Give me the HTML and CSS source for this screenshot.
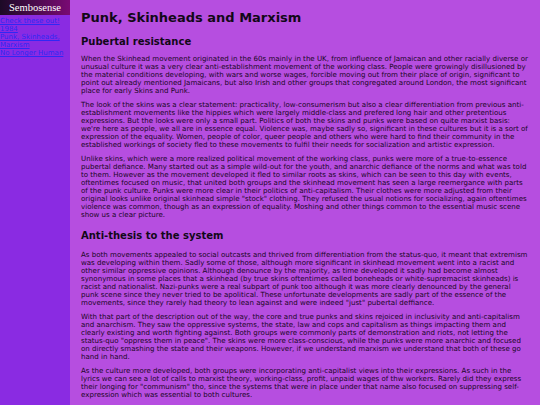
FILE: index.html
```html
<!DOCTYPE html>
<html>
<head>
<meta charset="utf-8">
<link rel="stylesheet" href="styles.css">
</head>
<body>
<div class="page">
  <aside class="sidebar">
    <div class="brand">Sembosense</div>
    <nav class="links">
      <a href="#">Check these out!</a>
      <a href="#">1984</a>
      <a href="#">Punk, Skinheads, Marxism</a>
      <a href="#">No Longer Human</a>
    </nav>
  </aside>
  <main class="content">
    <h1 class="title">Punk, Skinheads and Marxism</h1>
    <h2 class="section">Pubertal resistance</h2>
    <p>When the Skinhead movement originated in the 60s mainly in the UK, from influence of Jamaican and other racially diverse or unusual culture it was a very clear anti-establishment movement of the working class. People were growingly disillusioned by the material conditions developing, with wars and worse wages, forcible moving out from their place of origin, significant to point out already mentioned Jamaicans, but also Irish and other groups that congregated around London, the most significant place for early Skins and Punk.</p>
    <p>The look of the skins was a clear statement: practicality, low-consumerism but also a clear differentiation from previous anti-establishment movements like the hippies which were largely middle-class and prefered long hair and other pretentious expressions. But the looks were only a small part. Politics of both the skins and punks were based on quite marxist basis: we're here as people, we all are in essence equal. Violence was, maybe sadly so, significant in these cultures but it is a sort of expression of the equality. Women, people of color, queer people and others who were hard to find their community in the established workings of society fled to these movements to fulfil their needs for socialization and artistic expression.</p>
    <p>Unlike skins, which were a more realized political movement of the working class, punks were more of a true-to-essence pubertal defiance. Many started out as a simple wild-out for the youth, and anarchic defiance of the norms and what was told to them. However as the movement developed it fled to similar roots as skins, which can be seen to this day with events, oftentimes focused on music, that united both groups and the skinhead movement has seen a large reemergance with parts of the punk culture. Punks were more clear in their politics of anti-capitalism. Their clothes were more adjusted from their original looks unlike original skinhead simple "stock" clothing. They refused the usual notions for socializing, again oftentimes violence was common, though as an expression of equality. Moshing and other things common to the essential music scene show us a clear picture.</p>
    <h2 class="section section-gap">Anti-thesis to the system</h2>
    <p>As both movements appealed to social outcasts and thrived from differentiation from the status-quo, it meant that extremism was developing within them. Sadly some of those, although more significant in skinhead movement went into a racist and other similar oppressive opinions. Although denounce by the majority, as time developed it sadly had become almost synonymous in some places that a skinhead (by true skins oftentimes called boneheads or white-supremacist skinheads) is racist and nationalist. Nazi-punks were a real subpart of punk too although it was more clearly denounced by the general punk scene since they never tried to be apolitical. These unfortunate developments are sadly part of the essence of the movements, since they rarely had theory to lean against and were indeed "just" pubertal deffiance.</p>
    <p>With that part of the description out of the way, the core and true punks and skins rejoiced in inclusivity and anti-capitalism and anarchism. They saw the oppressive systems, the state, law and cops and capitalism as things impacting them and clearly existing and worth fighting against. Both groups were commonly parts of demonstration and riots, not letting the status-quo "oppress them in peace". The skins were more class-conscious, while the punks were more anarchic and focused on directly smashing the state and their weapons. However, if we understand marxism we understand that both of these go hand in hand.</p>
    <p>As the culture more developed, both groups were incorporating anti-capitalist views into their expressions. As such in the lyrics we can see a lot of calls to marxist theory, working-class, profit, unpaid wages of thw workers. Rarely did they express their longing for "communism" tho, since the systems that were in place under that name also focused on suppressing self-expression which was essential to both cultures.</p>
  </main>
</div>
</body>
</html>
```

FILE: styles.css
```css
html, body {
  margin: 0;
  padding: 0;
  height: 100%;
}
body {
  font-family: "DejaVu Sans", Verdana, sans-serif;
  background: #b64ee0;
  color: #1a0626;
}
.page {
  display: flex;
  min-height: 100%;
}
.sidebar {
  width: 70px;
  flex: none;
  background: #8a2be2;
}
.brand {
  height: 15px;
  line-height: 15px;
  text-align: center;
  color: #ffffff;
  font-family: "Liberation Serif", "DejaVu Serif", serif;
  font-size: 10.5px;
  background: linear-gradient(to right, #1c0a26, #7a0a74);
}
.links {
  display: flex;
  flex-direction: column;
  padding-top: 2px;
}
.links a {
  color: #3028f4;
  font-size: 7px;
  line-height: 8px;
  text-decoration: underline;
}
.content {
  flex: 1;
  padding: 0 11px 0 11px;
}
.title {
  font-size: 13px;
  font-weight: bold;
  line-height: 15px;
  margin: 10px 0 11px;
  color: #120818;
}
.section {
  font-size: 10px;
  font-weight: bold;
  line-height: 12px;
  margin: 0 0 7px;
  color: #120818;
}
.section-gap {
  margin-top: 11px;
  margin-bottom: 9px;
}
.content p {
  font-size: 7.07px;
  line-height: 8px;
  margin: 0 0 6px;
}
```
